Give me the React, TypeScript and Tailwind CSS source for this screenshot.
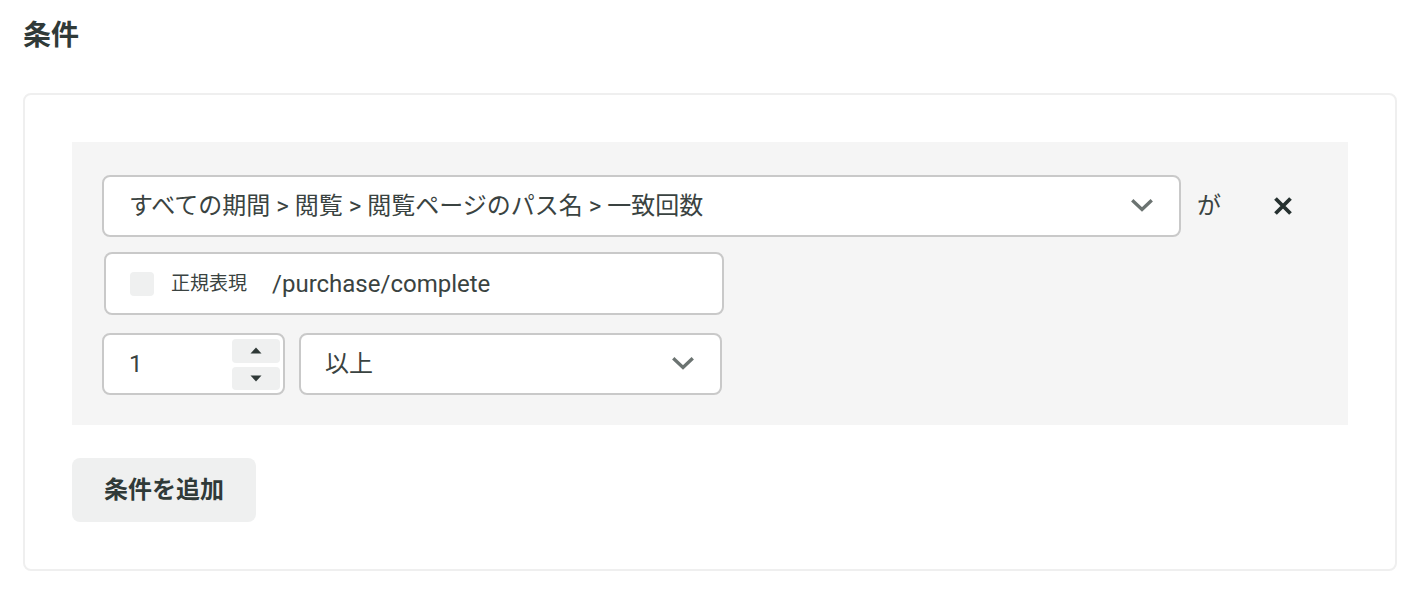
import React from "react";

const font = "font-['Roboto','Noto_Sans_CJK_JP',sans-serif]";

function Chevron() {
  return (
    <svg width="22" height="14" viewBox="0 0 22 14" fill="none" className="shrink-0">
      <path d="M2.5 2.5 L11 10.5 L19.5 2.5" stroke="#6b7371" strokeWidth="3.4" strokeLinecap="square" />
    </svg>
  );
}

function CloseIcon() {
  return (
    <svg width="20" height="20" viewBox="0 0 20 20" fill="none">
      <path d="M2.5 2.5 L17.5 17.5 M17.5 2.5 L2.5 17.5" stroke="#263130" strokeWidth="3.8" />
    </svg>
  );
}

function Caret({ up }: { up?: boolean }) {
  return (
    <svg width="12" height="7" viewBox="0 0 12 7">
      <path d={up ? "M6 0.5 L11.5 6.5 L0.5 6.5 Z" : "M0.5 0.5 L11.5 0.5 L6 6.5 Z"} fill="#2f3937" />
    </svg>
  );
}

export default function App() {
  return (
    <div className={`${font} min-h-[592px] bg-white px-[23px] pt-4 text-[#3a4341]`}>
      <h2 className="text-[28px] font-bold leading-[40px] text-[#303a38]">条件</h2>

      <div className="mt-[37px] rounded-[8px] border-2 border-[#efefef] p-[47px]">
        <div className="bg-[#f5f5f5] pb-[30px] pl-[30px] pt-[33px]">
          {/* field path + remove */}
          <div className="flex items-center">
            <div className="flex h-[62px] w-[1079px] items-center justify-between rounded-[8px] border-2 border-[#c9c9c9] bg-white pl-[25px] pr-[26px]">
              <span className="text-[24px]">すべての期間 &gt; 閲覧 &gt; 閲覧ページのパス名 &gt; 一致回数</span>
              <Chevron />
            </div>
            <span className="ml-[16px] text-[24px]">が</span>
            <button className="ml-[50px] flex h-[24px] w-[24px] items-center justify-center">
              <CloseIcon />
            </button>
          </div>

          {/* page path match */}
          <div className="ml-[2px] mt-[15px] flex h-[63px] w-[620px] items-center rounded-[8px] border-2 border-[#c9c9c9] bg-white pl-[24px]">
            <span className="h-[24px] w-[24px] rounded-[4px] bg-[#eff0f0]" />
            <span className="ml-[17px] pt-[2px] text-[19px]">正規表現</span>
            <span className="ml-[25px] text-[24px]">/purchase/complete</span>
          </div>

          {/* count + operator */}
          <div className="mt-[18px] flex gap-[14px]">
            <div className="flex h-[62px] w-[183px] items-center justify-between rounded-[8px] border-2 border-[#c9c9c9] bg-white pl-[25px] pr-[3px]">
              <span className="text-[24px]">1</span>
              <div className="flex flex-col gap-[4px]">
                <span className="flex h-[24px] w-[48px] items-center justify-center rounded-[4px] bg-[#eff0f0]">
                  <Caret up />
                </span>
                <span className="flex h-[23px] w-[48px] items-center justify-center rounded-[4px] bg-[#eff0f0]">
                  <Caret />
                </span>
              </div>
            </div>
            <div className="flex h-[62px] w-[423px] items-center justify-between rounded-[8px] border-2 border-[#c9c9c9] bg-white pl-[24px] pr-[26px]">
              <span className="text-[24px]">以上</span>
              <Chevron />
            </div>
          </div>
        </div>

        <button className="mt-[33px] h-[64px] w-[184px] rounded-[8px] bg-[#eff0f0] text-[24px] font-bold text-[#303a38]">
          条件を追加
        </button>
      </div>
    </div>
  );
}
